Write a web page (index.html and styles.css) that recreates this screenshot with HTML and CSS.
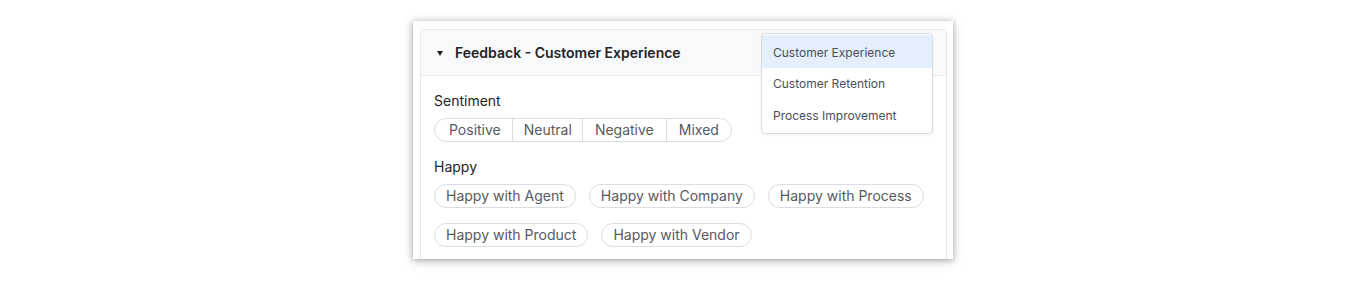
FILE: index.html
```html
<!DOCTYPE html>
<html>
<head>
<meta charset="utf-8">
<link rel="stylesheet" href="styles.css">
</head>
<body>
<div class="frame">
  <div class="card">
    <div class="card-header">
      <span class="caret"></span>
      <span class="title">Feedback - Customer Experience</span>
      <div class="dropdown">
        <div class="dd-item active">Customer Experience</div>
        <div class="dd-item">Customer Retention</div>
        <div class="dd-item">Process Improvement</div>
      </div>
    </div>
    <div class="card-body">
      <div class="group">
        <div class="label">Sentiment</div>
        <div class="segmented">
          <span class="seg">Positive</span>
          <span class="seg seg-narrow">Neutral</span>
          <span class="seg">Negative</span>
          <span class="seg">Mixed</span>
        </div>
      </div>
      <div class="group">
        <div class="label">Happy</div>
        <div class="chips">
          <span class="chip">Happy with Agent</span>
          <span class="chip">Happy with Company</span>
          <span class="chip">Happy with Process</span>
          <span class="chip">Happy with Product</span>
          <span class="chip">Happy with Vendor</span>
        </div>
      </div>
    </div>
  </div>
</div>
</body>
</html>
```

FILE: styles.css
```css
html, body {
  margin: 0;
  padding: 0;
  background: #ffffff;
  font-family: Inter, "Noto Sans", sans-serif;
}
body {
  display: flex;
  justify-content: center;
  padding-top: 21px;
  height: 281px;
  box-sizing: border-box;
  overflow: hidden;
}
.frame {
  width: 540px;
  height: 238px;
  box-sizing: border-box;
  padding: 8px 6px 0 7px;
  background: #ffffff;
  box-shadow: 0 1px 6px rgba(0,0,0,0.30), 0 2px 12px rgba(0,0,0,0.14);
  overflow: hidden;
}
.card {
  border: 1px solid #e6e7eb;
  border-bottom: none;
  border-radius: 4px 4px 0 0;
  height: 100%;
  box-sizing: border-box;
}
.card-header {
  position: relative;
  height: 45px;
  background: #f8f9fb;
  border-bottom: 1px solid #e9eaee;
  border-radius: 4px 4px 0 0;
  display: flex;
  align-items: center;
  padding-left: 16px;
  gap: 12px;
}
.caret {
  width: 0;
  height: 0;
  border-left: 3.5px solid transparent;
  border-right: 3.5px solid transparent;
  border-top: 5px solid #222;
  margin-top: 1px;
}
.title {
  font-size: 14px;
  font-weight: 600;
  color: #1f2328;
}
.dropdown {
  position: absolute;
  left: 340px;
  top: 3px;
  width: 172px;
  height: 101px;
  box-sizing: border-box;
  background: #fff;
  border: 1px solid #d9dce1;
  border-radius: 4px;
  box-shadow: 0 1px 3px rgba(0,0,0,0.06);
  padding-top: 1px;
  z-index: 2;
}
.dd-item {
  height: 32px;
  line-height: 32px;
  padding-left: 11px;
  font-size: 12px;
  color: #4a4f57;
}
.dd-item.active {
  background: #e4effc;
  height: 33px;
  line-height: 35px;
}
.card-body {
  padding: 16px 13px 0 13px;
  display: flex;
  flex-direction: column;
  gap: 16px;
}
.label {
  font-size: 14px;
  color: #1f2328;
  line-height: 18px;
  margin-bottom: 8px;
}
.segmented {
  display: inline-flex;
  border: 1px solid #dcdde2;
  border-radius: 12px;
  height: 24px;
  box-sizing: border-box;
  overflow: hidden;
}
.seg {
  font-size: 14px;
  color: #555a61;
  line-height: 22px;
  padding: 0 12px;
  border-left: 1px solid #dcdde2;
}
.seg:first-child {
  border-left: none;
  padding-left: 14px;
  padding-right: 11px;
}
.seg-narrow {
  padding: 0 10px 0 11px;
}
.chips {
  display: flex;
  flex-wrap: wrap;
  column-gap: 13px;
  row-gap: 15px;
  width: 500px;
  margin-top: 2px;
}
.chip {
  font-size: 14px;
  color: #555a61;
  height: 24px;
  line-height: 22px;
  box-sizing: border-box;
  padding: 0 11px;
  border: 1px solid #dcdde2;
  border-radius: 12px;
}
```
